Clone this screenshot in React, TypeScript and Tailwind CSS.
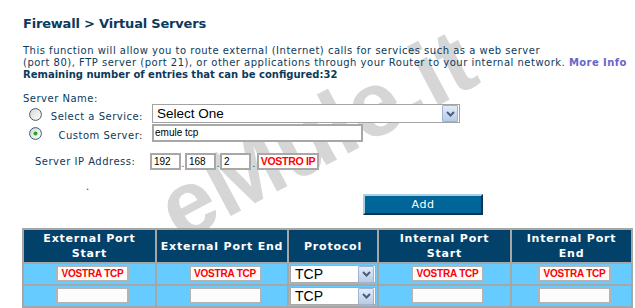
import React from "react";

const ink = "text-[#0c3a5c]";

function Radio({ checked, id }: { checked?: boolean; id: string }) {
  return (
    <svg width="13" height="13" viewBox="0 0 13 13" className="block">
      <defs>
        <linearGradient id={id} x1="0" y1="0" x2="1" y2="1">
          <stop offset="0" stopColor="#d6d6cf" />
          <stop offset="1" stopColor="#ffffff" />
        </linearGradient>
      </defs>
      <circle cx="6.5" cy="6.5" r="5.9" fill={`url(#${id})`} stroke="#3a5a78" strokeWidth="1" />
      {checked && <circle cx="6.5" cy="6.5" r="2" fill="#2aa52a" />}
    </svg>
  );
}

function ArrowBtn() {
  return (
    <div className="w-[16px] h-[17px] bg-linear-to-b from-[#e2ecf8] to-[#b8cce6] border border-[#9cb3d4] rounded-[1px] flex items-center justify-center">
      <svg width="9" height="6" viewBox="0 0 9 6" className="block">
        <path d="M1 1 L4.5 4.5 L8 1" fill="none" stroke="#4b5d7e" strokeWidth="2" />
      </svg>
    </div>
  );
}

function RedInput({ text }: { text?: string }) {
  return (
    <div className="w-[73px] h-[17px] border-2 border-[#b3b3b3] bg-[#fcfcfc] flex items-center justify-center whitespace-nowrap font-['Liberation_Sans',Arial,sans-serif] font-bold text-[10px] tracking-[-0.2px] text-[#ff0000]">
      {text}
    </div>
  );
}

function Proto() {
  return (
    <div className="ml-[1px] mt-[1px] w-[86px] h-[18px] border border-[#a9a9a9] bg-white flex items-center justify-between pr-[1px]">
      <span className="pl-[4px] font-['Liberation_Sans',Arial,sans-serif] text-[14px] leading-[16px] text-black">TCP</span>
      <ArrowBtn />
    </div>
  );
}

export default function App() {
  const head = "bg-[#02426a] text-white font-bold text-[11px] tracking-[0.8px] leading-[15px] flex items-center justify-center text-center h-[32px]";
  const cell = "bg-[#66ccff] h-[20px] flex items-start justify-center pt-[1px] pl-[6px]";
  return (
    <div className="relative w-[635px] h-[308px] overflow-hidden bg-white font-['DejaVu_Sans',Verdana,sans-serif]">
      {/* watermark */}
      <div className="absolute left-[180px] top-[165px] h-[92px] origin-[0px_78px] [transform:rotate(-28deg)] font-['Liberation_Sans',Arial,sans-serif] font-bold text-[92px] leading-[92px] text-[#d6d6d6] whitespace-nowrap select-none">
        eMule.it
      </div>

      <div className={`relative pl-[23px] ${ink}`}>
        <div className="pt-[16px] h-[32px] text-[13px] font-bold leading-[16px] tracking-[-0.2px] whitespace-nowrap">
          Firewall &gt; Virtual Servers
        </div>

        <div className="mt-[13px] text-[10px] leading-[12px] tracking-[0.5px] whitespace-nowrap">
          <div>This function will allow you to route external (Internet) calls for services such as a web server</div>
          <div>
            (port 80), FTP server (port 21), or other applications through your Router to your internal network.{" "}
            <span className="font-bold text-[#6666cc] tracking-[0.4px]">More Info</span>
          </div>
          <div className="font-bold tracking-normal">Remaining number of entries that can be configured:32</div>
        </div>

        <div className="mt-[12px] h-[11px] text-[10px] leading-[12px] tracking-[0.5px] whitespace-nowrap">Server Name:</div>

        {/* select service row */}
        <div className="flex h-[20px] items-start">
          <div className="ml-[6px] mt-[4px]">
            <Radio id="r1" />
          </div>
          <div className="w-[101px] mt-[7px] text-right text-[10px] leading-[12px] tracking-[0.5px] whitespace-nowrap">Select a Service:</div>
          <div className="ml-[9px] w-[308px] h-[19px] border border-[#a3a3a3] bg-white flex items-center justify-between pr-[1px]">
            <span className="pl-[4px] font-['Liberation_Sans',Arial,sans-serif] text-[13.5px] leading-[16px] text-black">Select One</span>
            <ArrowBtn />
          </div>
        </div>

        {/* custom server row */}
        <div className="flex h-[18px] items-start">
          <div className="ml-[6px] mt-[3px]">
            <Radio id="r2" checked />
          </div>
          <div className="w-[101px] mt-[6px] text-right text-[10px] leading-[12px] tracking-[0.5px] whitespace-nowrap">Custom Server:</div>
          <div className="ml-[9px] w-[211px] h-[18px] border-2 border-[#a8a8a8] bg-white flex items-center">
            <span className="pl-[1px] font-['Liberation_Sans',Arial,sans-serif] text-[10px] leading-[12px] text-black">emule tcp</span>
          </div>
        </div>

        {/* ip row */}
        <div className="mt-[11px] flex h-[17px] items-start">
          <div className="ml-[12px] w-[115px] mt-[3px] text-[10px] leading-[12px] tracking-[0.5px] whitespace-nowrap">Server IP Address:</div>
          <div className="flex items-end font-['Liberation_Sans',Arial,sans-serif] text-[10px] text-black">
            <div className="w-[31px] h-[17px] border-2 border-[#a8a8a8] bg-white pl-[2px] leading-[13px]">192</div>
            <span className="w-[4px] text-center leading-[12px] text-[#0c3a5c]">.</span>
            <div className="w-[31px] h-[17px] border-2 border-[#a8a8a8] bg-white pl-[2px] leading-[13px]">168</div>
            <span className="w-[4px] text-center leading-[12px] text-[#0c3a5c]">.</span>
            <div className="w-[31px] h-[17px] border-2 border-[#a8a8a8] bg-white pl-[2px] leading-[13px]">2</div>
            <span className="w-[6px] text-center leading-[12px] text-[#0c3a5c]">.</span>
            <div className="w-[62px] h-[17px] border-2 border-[#a8a8a8] bg-white flex items-center justify-center whitespace-nowrap overflow-hidden font-bold text-[10.5px] tracking-[-0.3px] text-[#ff0000]">VOSTRO IP</div>
          </div>
        </div>

        {/* dot + add */}
        <div className="flex items-start h-[45px]">
          <span className="ml-[63px] w-[277px] mt-[11px] text-[10px] leading-[12px]">.</span>
          <button className="mt-[24px] w-[120px] h-[21px] bg-[#006699] border-2 border-t-[#a9d0e0] border-l-[#a9d0e0] border-b-[#0a3552] border-r-[#0a3552] text-white text-[11px] tracking-[0.5px] leading-[15px] font-['DejaVu_Sans',Verdana,sans-serif]">
            Add
          </button>
        </div>

        {/* table */}
        <div className="-ml-[1px] mt-[13px] w-[611px] bg-[#a6a6a6] p-[2px] grid grid-cols-[131px_130px_88px_131px_119px] gap-[2px]">
          <div className={head}>External Port<br />Start</div>
          <div className={head}>External Port End</div>
          <div className={head}>Protocol</div>
          <div className={head}>Internal Port<br />Start</div>
          <div className={head}>Internal Port<br />End</div>

          <div className={cell}><RedInput text="VOSTRA TCP" /></div>
          <div className={cell}><RedInput text="VOSTRA TCP" /></div>
          <div className="bg-[#66ccff] h-[20px]"><Proto /></div>
          <div className={cell}><RedInput text="VOSTRA TCP" /></div>
          <div className={cell}><RedInput text="VOSTRA TCP" /></div>

          <div className={cell}><RedInput /></div>
          <div className={cell}><RedInput /></div>
          <div className="bg-[#66ccff] h-[20px]"><Proto /></div>
          <div className={cell}><RedInput /></div>
          <div className={cell}><RedInput /></div>
        </div>
      </div>
    </div>
  );
}
